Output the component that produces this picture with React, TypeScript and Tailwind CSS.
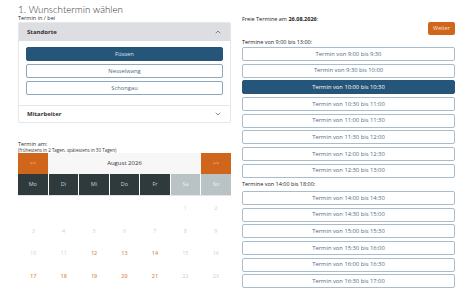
import React from 'react';
import { ChevronUp, ChevronDown } from 'lucide-react';

const morning = [
  '9:00 bis 9:30',
  '9:30 bis 10:00',
  '10:00 bis 10:30',
  '10:30 bis 11:00',
  '11:00 bis 11:30',
  '11:30 bis 12:00',
  '12:00 bis 12:30',
  '12:30 bis 13:00',
];

const afternoon = [
  '14:00 bis 14:30',
  '14:30 bis 15:00',
  '15:00 bis 15:30',
  '15:30 bis 16:00',
  '16:00 bis 16:30',
  '16:30 bis 17:00',
];

const weekdays = ['Mo', 'Di', 'Mi', 'Do', 'Fr', 'Sa', 'So'];

// August 2026 starts on a Saturday
const weeks: (number | null)[][] = [
  [null, null, null, null, null, 1, 2],
  [3, 4, 5, 6, 7, 8, 9],
  [10, 11, 12, 13, 14, 15, 16],
  [17, 18, 19, 20, 21, 22, 23],
];
const available = [12, 13, 14, 17, 18, 19, 20, 21];

const Slot: React.FC<{ label: string; active?: boolean }> = ({ label, active }) => (
  <button
    className={
      active
        ? 'h-[14px] w-full rounded-[2px] border border-[#26557a] bg-[#26557a] text-[5.8px] text-white flex items-center justify-center'
        : 'h-[14px] w-full rounded-[2px] border border-[#a9bccb] bg-white text-[5.8px] text-[#4d6b84] flex items-center justify-center'
    }
  >
    Termin von {label}
  </button>
);

const LocationButton: React.FC<{ label: string; active?: boolean }> = ({ label, active }) => (
  <button
    className={
      active
        ? 'h-[14px] w-full rounded-[2px] border border-[#26557a] bg-[#26557a] text-[5.8px] text-[#dfe7ee] flex items-center justify-center'
        : 'h-[14px] w-full rounded-[2px] border border-[#8fa7ba] bg-white text-[5.8px] text-[#4d6b84] flex items-center justify-center'
    }
  >
    {label}
  </button>
);

export default function App() {
  return (
    <div className="w-[473px] h-[290px] overflow-hidden bg-white flex px-[18px] gap-[11px] text-[#222]" style={{ fontFamily: '"Open Sans", sans-serif' }}>
      {/* left column */}
      <div className="w-[213px] flex flex-col">
        <div className="h-[15px] pt-[3px] text-[9.8px] leading-[12px] font-light text-[#333]" style={{ fontFamily: 'Lato, sans-serif' }}>
          1. Wunschtermin wählen
        </div>
        <div className="h-[7px] text-[5.5px] leading-[7px] text-[#333]">Termin in / bei</div>

        <div className="rounded-[2px] border border-[#e6e7e9] shadow-[0_0_1px_rgba(0,0,0,0.08)]">
          <div className="h-[18px] bg-[#dcdee1] flex items-center justify-between px-[8px]">
            <span className="text-[6px] font-bold text-[#333]">Standorte</span>
            <ChevronUp className="w-[8px] h-[8px] text-[#555]" strokeWidth={2} />
          </div>
          <div className="flex flex-col gap-[3px] px-[7px] pt-[6px] pb-[10px]">
            <LocationButton label="Füssen" active />
            <LocationButton label="Nesselwang" />
            <LocationButton label="Schongau" />
          </div>
          <div className="h-[17px] border-t border-[#e6e7e9] flex items-center justify-between px-[8px]">
            <span className="text-[6px] font-bold text-[#333]">Mitarbeiter</span>
            <ChevronDown className="w-[8px] h-[8px] text-[#555]" strokeWidth={2} />
          </div>
        </div>

        <div className="mt-[18px] text-[5.5px] leading-[6px] text-[#333]">Termin am:</div>
        <div className="text-[4.5px] leading-[6px] text-[#333]">(frühestens in 2 Tagen, spätestens in 30 Tagen)</div>

        <div className="flex h-[21px]">
          <div className="w-[30px] bg-[#d0661c] text-[#f3d6c2] text-[5.5px] flex items-center justify-center">&lt;&lt;</div>
          <div className="flex-1 bg-[#f7f7f7] text-[6px] text-[#333] flex items-center justify-center">August 2026</div>
          <div className="w-[30px] bg-[#d0661c] text-[#f3d6c2] text-[5.5px] flex items-center justify-center">&gt;&gt;</div>
        </div>
        <div className="grid grid-cols-7 gap-x-px h-[22px] border-b border-[#e5e5e5]">
          {weekdays.map((d, i) => (
            <div
              key={d}
              className={
                i < 5
                  ? 'bg-[#2f3a3d] text-[#c9cfd1] text-[5.5px] flex items-center justify-center'
                  : 'bg-[#b9c2c4] text-[#eef1f2] text-[5.5px] flex items-center justify-center'
              }
            >
              {d}
            </div>
          ))}
        </div>
        <div className="flex flex-col pt-[1px]">
          {weeks.map((w, wi) => (
            <div key={wi} className="grid grid-cols-7 h-[22.6px]">
              {w.map((n, di) => (
                <div
                  key={di}
                  className={
                    n !== null && available.includes(n)
                      ? 'flex items-center justify-center text-[5.5px] font-semibold text-[#e5905a]'
                      : 'flex items-center justify-center text-[5.5px] text-[#cfcfcf]'
                  }
                >
                  {n ?? ''}
                </div>
              ))}
            </div>
          ))}
        </div>
      </div>

      {/* right column */}
      <div className="w-[213px] flex flex-col">
        <div className="mt-[16px] h-[6px] text-[5.5px] leading-[6px] text-[#222]">
          Freie Termine am <span className="font-bold">26.08.2026</span>:
        </div>
        <div className="flex justify-end">
          <button className="w-[27px] h-[13px] rounded-[2px] bg-[#d0661c] text-[5.5px] text-[#f6e1d2] flex items-center justify-center">
            Weiter
          </button>
        </div>
        <div className="mt-[4px] h-[7px] text-[5.5px] leading-[7px] text-[#222]">Termine von 9:00 bis 13:00:</div>
        <div className="flex flex-col gap-[2.67px] mt-[1px]">
          {morning.map((m) => (
            <Slot key={m} label={m} active={m === '10:00 bis 10:30'} />
          ))}
        </div>
        <div className="h-[13.4px] text-[5.5px] leading-[13px] text-[#222]">Termine von 14:00 bis 18:00:</div>
        <div className="flex flex-col gap-[2.67px]">
          {afternoon.map((m) => (
            <Slot key={m} label={m} />
          ))}
        </div>
      </div>
    </div>
  );
}
